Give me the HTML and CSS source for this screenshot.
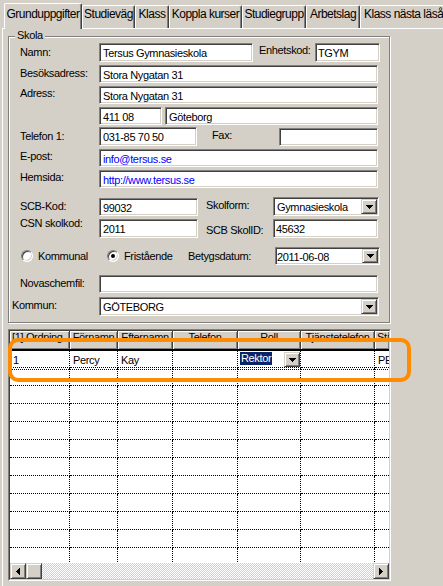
FILE: index.html
```html
<!DOCTYPE html>
<html lang="sv">
<head>
<meta charset="utf-8">
<title>Grunduppgifter</title>
<link rel="stylesheet" href="styles.css">
</head>
<body>
<div class="tabs">
  <div class="tab sel t1">Grunduppgifter</div>
  <div class="tab t2">Studieväg</div>
  <div class="tab t3">Klass</div>
  <div class="tab t4">Koppla kurser</div>
  <div class="tab t5">Studiegrupp</div>
  <div class="tab t6">Arbetslag</div>
  <div class="tab t7">Klass nästa läsår</div>
</div>
<div class="panel">
  <div class="gb">
    <span class="legend">Skola</span>

    <div class="row rh22">
      <span class="lbl lm2">Namn:</span>
      <div class="inp i19 w154">Tersus Gymnasieskola</div>
      <span class="lbl2 enh">Enhetskod:</span>
      <div class="inp i19 w65 tight">TGYM</div>
    </div>

    <div class="row rh21">
      <span class="lbl lm1">Besöksadress:</span>
      <div class="inp w279">Stora Nygatan 31</div>
    </div>

    <div class="row rh21">
      <span class="lbl">Adress:</span>
      <div class="inp w279">Stora Nygatan 31</div>
    </div>

    <div class="row rh20">
      <span class="lbl"></span>
      <div class="inp w63">411 08</div>
      <div class="inp w213 ml3">Göteborg</div>
    </div>

    <div class="row rh22">
      <span class="lbl lm2">Telefon 1:</span>
      <div class="inp i19 w98">031-85 70 50</div>
      <span class="lbl2 fax lm1">Fax:</span>
      <div class="inp w99 im1"></div>
    </div>

    <div class="row rh21">
      <span class="lbl">E-post:</span>
      <div class="inp w279 link">info@tersus.se</div>
    </div>

    <div class="row rh28">
      <span class="lbl">Hemsida:</span>
      <div class="inp w279 link">http://www.tersus.se</div>
    </div>

    <div class="row rh21">
      <span class="lbl lm1">SCB-Kod:</span>
      <div class="inp w99">99032</div>
      <span class="lbl2 skf">Skolform:</span>
      <div class="combo w106 i19 up1">
        <span class="val">Gymnasieskola</span>
        <span class="b3d dd"><svg width="7" height="4" viewBox="0 0 7 4"><path d="M0 0h7v1H0zM1 1h5v1H1zM2 2h3v1H2zM3 3h1v1H3z"/></svg></span>
      </div>
    </div>

    <div class="row rh28">
      <span class="lbl up3">CSN skolkod:</span>
      <div class="inp i19 w99">2011</div>
      <span class="lbl2 skf lm4">SCB SkolID:</span>
      <div class="inp i19 w105 tight">45632</div>
    </div>

    <div class="row rh28">
      <span class="opt o1"><span class="radio"></span><span class="otext">Kommunal</span></span>
      <span class="opt o2"><span class="radio on"></span><span class="otext">Fristående</span></span>
      <span class="lbl2 bet">Betygsdatum:</span>
      <div class="combo w105 date">
        <span class="val">2011-06-08</span>
        <span class="b3d dd"><svg width="7" height="4" viewBox="0 0 7 4"><path d="M0 0h7v1H0zM1 1h5v1H1zM2 2h3v1H2zM3 3h1v1H3z"/></svg></span>
      </div>
    </div>

    <div class="row rh22">
      <span class="lbl lm1">Novaschemfil:</span>
      <div class="inp w279"></div>
    </div>

    <div class="row">
      <span class="lbl kom">Kommun:</span>
      <div class="combo w280 i19">
        <span class="val">GÖTEBORG</span>
        <span class="b3d dd"><svg width="7" height="4" viewBox="0 0 7 4"><path d="M0 0h7v1H0zM1 1h5v1H1zM2 2h3v1H2zM3 3h1v1H3z"/></svg></span>
      </div>
    </div>
  </div>

  <div class="gridout">
    <div class="gridin">
      <div class="hdr">
        <div class="hc left">[1] Ordning</div>
        <div class="hc">Förnamn</div>
        <div class="hc">Efternamn</div>
        <div class="hc">Telefon</div>
        <div class="hc">Roll</div>
        <div class="hc">Tjänstetelefon</div>
        <div class="hc left last">Stadsdel</div>
      </div>
      <div class="data">
        <div class="r first">
          <div class="c">1</div>
          <div class="c">Percy</div>
          <div class="c">Kay</div>
          <div class="c"></div>
          <div class="c roll"><span class="hl">Rektor</span><span class="b3d cdd"><svg width="7" height="4" viewBox="0 0 7 4"><path d="M0 0h7v1H0zM1 1h5v1H1zM2 2h3v1H2zM3 3h1v1H3z"/></svg></span></div>
          <div class="c"></div>
          <div class="c last">PE</div>
        </div>
        <div class="r newrow"><div class="c"></div><div class="c"></div><div class="c"></div><div class="c"></div><div class="c"></div><div class="c"></div><div class="c last"></div></div>
        <div class="r"><div class="c"></div><div class="c"></div><div class="c"></div><div class="c"></div><div class="c"></div><div class="c"></div><div class="c last"></div></div>
        <div class="r"><div class="c"></div><div class="c"></div><div class="c"></div><div class="c"></div><div class="c"></div><div class="c"></div><div class="c last"></div></div>
        <div class="r"><div class="c"></div><div class="c"></div><div class="c"></div><div class="c"></div><div class="c"></div><div class="c"></div><div class="c last"></div></div>
        <div class="r"><div class="c"></div><div class="c"></div><div class="c"></div><div class="c"></div><div class="c"></div><div class="c"></div><div class="c last"></div></div>
        <div class="r"><div class="c"></div><div class="c"></div><div class="c"></div><div class="c"></div><div class="c"></div><div class="c"></div><div class="c last"></div></div>
        <div class="r"><div class="c"></div><div class="c"></div><div class="c"></div><div class="c"></div><div class="c"></div><div class="c"></div><div class="c last"></div></div>
        <div class="r"><div class="c"></div><div class="c"></div><div class="c"></div><div class="c"></div><div class="c"></div><div class="c"></div><div class="c last"></div></div>
        <div class="r"><div class="c"></div><div class="c"></div><div class="c"></div><div class="c"></div><div class="c"></div><div class="c"></div><div class="c last"></div></div>
        <div class="r"><div class="c"></div><div class="c"></div><div class="c"></div><div class="c"></div><div class="c"></div><div class="c"></div><div class="c last"></div></div>
        <div class="r"><div class="c"></div><div class="c"></div><div class="c"></div><div class="c"></div><div class="c"></div><div class="c"></div><div class="c last"></div></div>
      </div>
      <div class="hscroll">
        <span class="b3d sbtn"><svg width="4" height="7" viewBox="0 0 4 7"><path d="M3 0h1v7H3zM2 1h1v5H2zM1 2h1v3H1zM0 3h1v1H0z"/></svg></span>
        <span class="b3d sbtn"></span>
        <span class="track"></span>
        <span class="b3d sbtn"><svg width="4" height="7" viewBox="0 0 4 7"><path d="M0 0h1v7H0zM1 1h1v5H1zM2 2h1v3H2zM3 3h1v1H3z"/></svg></span>
      </div>
    </div>
  </div>

  <div class="mark"></div>
</div>
</body>
</html>
```

FILE: styles.css
```css
* { box-sizing: border-box; }
html, body { margin: 0; padding: 0; }
body {
  width: 443px;
  height: 586px;
  overflow: hidden;
  background: #d4d0c8;
  color: #000;
  font-family: "Liberation Sans", Arial, sans-serif;
  font-size: 11px;
  line-height: 14px;
  letter-spacing: -0.35px;
}

/* ---------- tabs ---------- */
.tabs {
  position: relative;
  z-index: 2;
  display: flex;
  align-items: flex-end;
  height: 28px;
  padding-left: 4px;
  white-space: nowrap;
}
.tab {
  flex: none;
  height: 23px;
  padding-top: 1px;
  border-top: 1px solid #fff;
  border-left: 1px solid #fff;
  border-right: 1px solid #404040;
  border-radius: 2px 2px 0 0;
  box-shadow: inset -1px 0 #808080;
  background: #d4d0c8;
  font-size: 12px;
  line-height: 15px;
  letter-spacing: -0.5px;
  text-align: center;
}
.tab.sel {
  height: 26px;
  margin-bottom: -1px;
  padding-top: 3px;
}
.t1 { width: 78px; }
.t2 { width: 53px; }
.t3 { width: 34px; }
.t4 { width: 73px; }
.t5 { width: 64px; }
.t6 { width: 54px; }
.t7 { width: 92px; text-align: left; padding-left: 3px; }

/* ---------- panel ---------- */
.panel {
  position: relative;
  height: 558px;
  margin-left: 2px;
  border-top: 1px solid #fff;
  border-left: 1px solid #fff;
}

/* group box */
.gb {
  position: relative;
  width: 382px;
  height: 287px;
  margin: 7px 0 0 5px;
  padding: 6px 0 0 11px;
  border: 1px solid #808080;
  box-shadow: inset 1px 1px #fff, 1px 1px #fff;
}
.legend {
  position: absolute;
  left: 6px;
  top: -9px;
  padding: 0 2px;
  background: #d4d0c8;
}

.row { display: flex; align-items: flex-start; white-space: nowrap; }
.rh20 { height: 20px; }
.rh21 { height: 21px; }
.rh22 { height: 22px; }
.rh28 { height: 28px; }

.lbl { flex: none; width: 79px; }
.lbl2 { flex: none; }
.lm1 { margin-top: 1px; }
.lm2 { margin-top: 2px; }
.lm4 { margin-top: 4px; }
.up3 { margin-top: -3px; }
.enh { width: 56px; margin-left: 6px; }
.fax { width: 67px; margin-left: 15px; }
.skf { width: 67px; margin-left: 8px; }
.bet { width: 87px; margin-top: 2px; }
.kom { width: 87px; margin-left: -8px; margin-top: 1px; }

/* sunken edit */
.inp, .combo {
  flex: none;
  height: 18px;
  background: #fff;
  border: 1px solid;
  border-color: #808080 #fff #fff #808080;
  box-shadow: inset 1px 1px #404040, inset -1px -1px #d4d0c8;
  overflow: hidden;
  white-space: nowrap;
}
.inp { padding: 2px 0 0 3px; }
.inp.tight { padding-left: 2px; }
.i19 { height: 19px; }
.im1 { margin-top: 1px; }
.up1 { margin-top: -1px; }
.ml3 { margin-left: 3px; }
.w63 { width: 63px; }
.w65 { width: 65px; }
.w98 { width: 98px; }
.w99 { width: 99px; }
.w105 { width: 105px; }
.w106 { width: 106px; }
.w154 { width: 154px; }
.w213 { width: 213px; }
.w279 { width: 279px; }
.w280 { width: 280px; }
.link { color: #0000ff; }

/* combo box */
.combo {
  display: flex;
  padding: 1px;
}
.combo .val { flex: 1; padding: 1px 0 0 2px; overflow: hidden; }
.combo.date .val { padding-left: 0; }
.combo .dd { flex: none; width: 16px; }

/* raised 3D button */
.b3d {
  display: flex;
  align-items: center;
  justify-content: center;
  background: #d4d0c8;
  border: 1px solid;
  border-color: #d4d0c8 #404040 #404040 #d4d0c8;
  box-shadow: inset 1px 1px #fff, inset -1px -1px #808080;
}
.b3d svg { display: block; fill: #000; }

/* radios */
.opt { display: flex; align-items: flex-start; flex: none; }
.o1 { width: 86px; margin-left: 1px; }
.o2 { width: 81px; }
.radio {
  position: relative;
  flex: none;
  width: 12px;
  height: 12px;
  margin-top: 3px;
  border-radius: 50%;
  background: #fff;
  border: 1px solid;
  border-color: #808080 #fff #fff #808080;
  box-shadow: inset 1px 1px #404040, inset -1px -1px #d4d0c8;
}
.radio.on::after {
  content: "";
  position: absolute;
  left: 3px;
  top: 3px;
  width: 4px;
  height: 4px;
  border-radius: 50%;
  background: #000;
}
.otext { margin-left: 5px; margin-top: 2px; }

/* ---------- grid ---------- */
.gridout {
  width: 383px;
  height: 252px;
  margin: 6px 0 0 5px;
  border: 1px solid;
  border-color: #808080 #fff #fff #808080;
}
.gridin {
  display: flex;
  flex-direction: column;
  height: 100%;
  background: #fff;
  border: 1px solid;
  border-color: #404040 #d4d0c8 #d4d0c8 #404040;
}
.hdr, .r {
  display: grid;
  grid-template-columns: 60px 48px 55px 65px 63px 74px minmax(0, 1fr);
  flex: none;
}
.hdr {
  height: 20px;
  background: #d4d0c8;
  border-bottom: 2px solid #000;
}
.hc {
  height: 18px;
  overflow: hidden;
  white-space: nowrap;
  text-align: center;
  line-height: 12px;
  border-right: 1px solid #404040;
  box-shadow: inset 1px 1px #fff, inset -1px -1px #808080;
}
.hc.left { text-align: left; padding-left: 2px; }
.hc.last { border-right: 0; }

.data { flex: 1; overflow: hidden; }
.r { height: 18px; }
.c {
  height: 18px;
  padding: 2px 0 0 3px;
  overflow: hidden;
  white-space: nowrap;
  border-right: 1px dotted #000;
  border-bottom: 1px dotted #000;
}
.c.last { border-right: 0; }
.r.first .c { height: 17px; }
.r.first { height: 17px; }
.r.newrow .c {
  background-image: repeating-linear-gradient(to right, #000 0 1px, transparent 1px 2px);
  background-size: 100% 1px;
  background-position: 0 1px;
  background-repeat: no-repeat;
}
.c.roll {
  display: flex;
  justify-content: space-between;
  align-items: flex-start;
  padding: 1px 0 0 2px;
}
.hl {
  height: 13px;
  line-height: 13px;
  padding: 0 1px;
  background: #0a246a;
  color: #fff;
}
.cdd { width: 16px; height: 15px; }

.hscroll { display: flex; height: 16px; flex: none; }
.sbtn { flex: none; width: 16px; height: 16px; }
.track {
  flex: 1;
  background-color: #d4d0c8;
  background-image: conic-gradient(#fff 25%, #d4d0c8 0 50%, #fff 0 75%, #d4d0c8 0);
  background-size: 2px 2px;
}

/* highlight annotation */
.mark {
  position: absolute;
  left: 5px;
  top: 309px;
  width: 403px;
  height: 44px;
  border: 4px solid #ff8c00;
  border-radius: 10px;
  pointer-events: none;
}
```
